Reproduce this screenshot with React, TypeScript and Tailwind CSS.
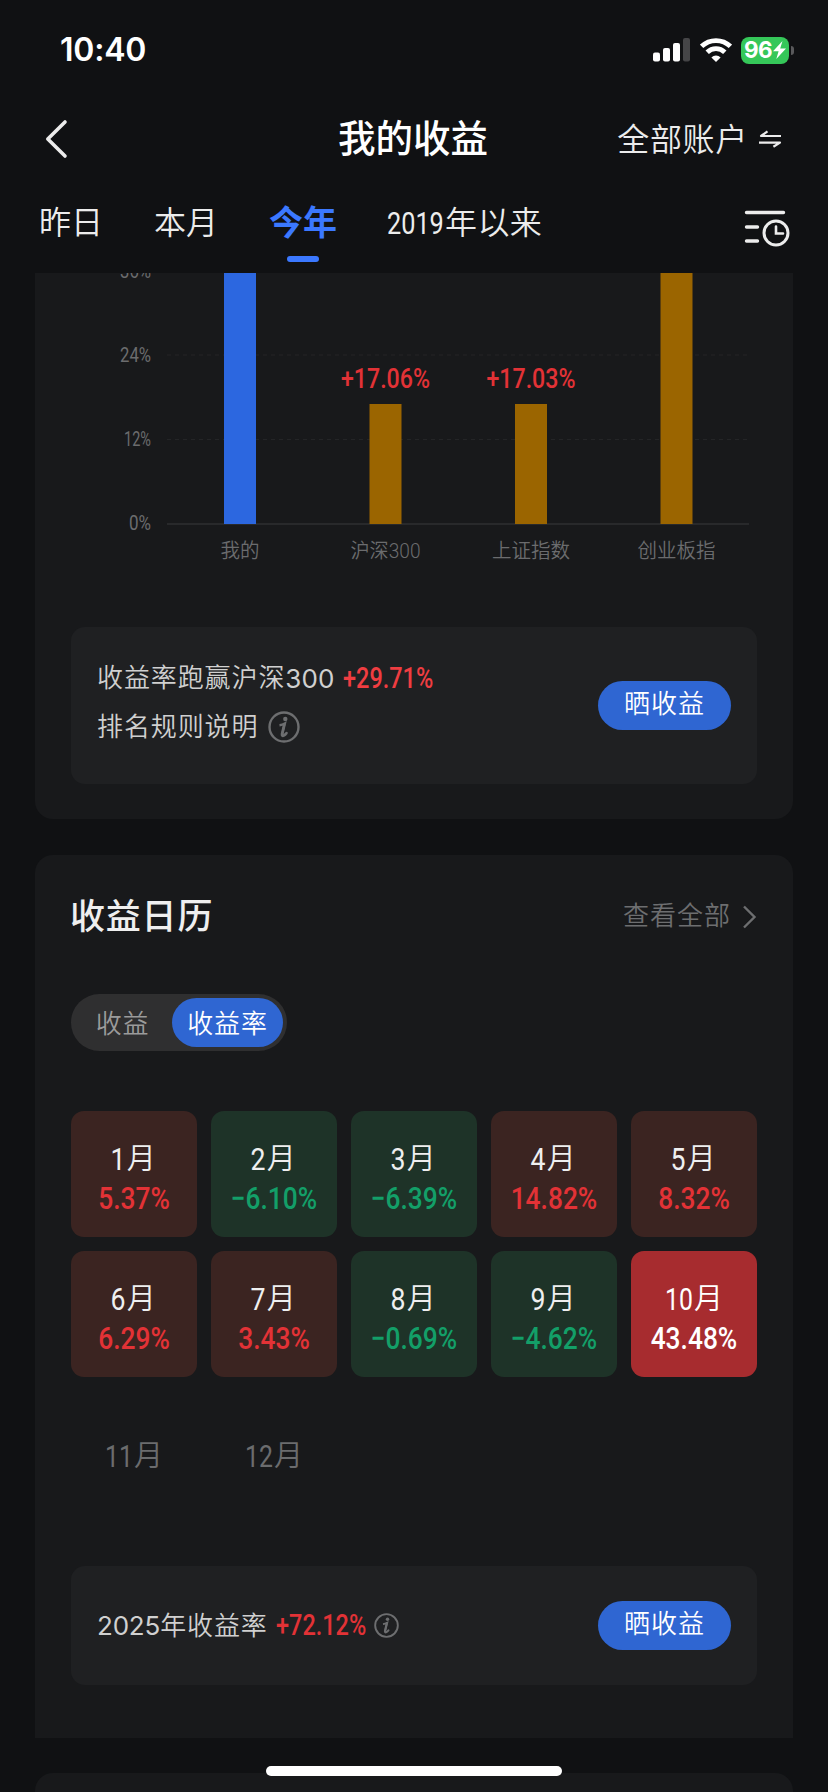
import React, { useState } from 'react';
import clsx from 'clsx';

const FONT = 'font-[Roboto,"Noto_Sans_CJK_SC",sans-serif]';

const months = [
  { label: '1', value: '5.37%' },
  { label: '2', value: '−6.10%' },
  { label: '3', value: '−6.39%' },
  { label: '4', value: '14.82%' },
  { label: '5', value: '8.32%' },
  { label: '6', value: '6.29%' },
  { label: '7', value: '3.43%' },
  { label: '8', value: '−0.69%' },
  { label: '9', value: '−4.62%' },
  { label: '10', value: '43.48%', current: true },
  { label: '11' },
  { label: '12' },
];

const bars = [
  { name: '我的', x: 205, top: 0, fill: '#2c67e0', width: 39 },
  { name: '沪深300', x: 350.5, top: 131, fill: '#9b6500', label: '+17.06%', width: 70 },
  { name: '上证指数', x: 496, top: 131, fill: '#9b6500', label: '+17.03%', width: 78 },
  { name: '创业板指', x: 641.5, top: 0, fill: '#9b6500', width: 78 },
];

const ticks = [
  { label: '36%', y: -3, width: 31 },
  { label: '24%', y: 81, width: 31 },
  { label: '12%', y: 165, width: 27 },
  { label: '0%', y: 249, width: 22 },
];

function StatusBar() {
  return (
    <div className="flex h-[100px] shrink-0 items-center justify-between pl-[60px] pr-[34px]">
      <span className='font-["Inter",sans-serif] text-[32px] font-semibold leading-none tracking-[-0.2px]'>10:40</span>
      <div className="flex items-center">
        <svg width="38" height="24" viewBox="0 0 38 24" fill="#fff">
          <rect x="0" y="14.5" width="7" height="9" rx="2" />
          <rect x="10" y="10" width="7" height="13.5" rx="2" />
          <rect x="20" y="5" width="7" height="18.5" rx="2" />
          <rect x="30" y="0" width="7" height="23.5" rx="2" fill="#454547" />
        </svg>
        <svg className="ml-[9px]" width="32" height="24" viewBox="0 0 32 24" fill="none" stroke="#fff">
          <path d="M1.6 8.4a20.6 20.6 0 0 1 28.8 0" strokeWidth="4.8" />
          <path d="M7.2 14.2a12.6 12.6 0 0 1 17.6 0" strokeWidth="4.8" />
          <path d="M11.4 19.4a6.6 6.6 0 0 1 9.2 0L16 24z" fill="#fff" stroke="none" />
        </svg>
        <div className="ml-[9px] flex h-[27px] w-[48px] items-center justify-center gap-px rounded-[8px] bg-[#35c759] text-white">
          <span className='font-["Inter",sans-serif] text-[22.5px] font-bold leading-none tracking-[-0.5px]'>96</span>
          <svg width="13" height="18" viewBox="0 0 13 18" fill="#fff">
            <path d="M9.5 0 0 10.2h5.6L3.3 18 13 7.6H7.2z" />
          </svg>
        </div>
        <div className="ml-[2px] h-[9px] w-[3px] rounded-r-full bg-[#59595b]" />
      </div>
    </div>
  );
}

function Header() {
  return (
    <div className="grid h-[78px] shrink-0 grid-cols-[1fr_auto_1fr] items-center pl-[44px] pr-[46px]">
      <svg width="26" height="40" viewBox="0 0 26 40" fill="none" stroke="#ececec" strokeWidth="3.6" strokeLinecap="round" strokeLinejoin="round">
        <path d="M21 3 3.8 20 21 37" />
      </svg>
      <h1 className="pt-[2px] text-[37.5px] font-medium leading-none">我的收益</h1>
      <div className="flex items-center justify-end">
        <span className="pt-[2px] text-[32px] font-[350] leading-none tracking-[0.7px] text-[#ececec]">全部账户</span>
        <svg className="ml-[11px]" width="23" height="18" viewBox="0 0 23 18" fill="none" stroke="#ececec" strokeWidth="2.2" strokeLinejoin="round">
          <path d="M22 6H2l6.5-4.6M0 12.6h21l-6.6 4.2" />
        </svg>
      </div>
    </div>
  );
}

function Tabs() {
  const [active, setActive] = useState(2);
  const tabs = ['昨日', '本月', '今年'];

  return (
    <div className="flex h-[95px] shrink-0 items-start pl-[39px] pr-[38px] pt-[22px]">
      {tabs.map((tab, i) => (
        <button
          key={tab}
          onClick={() => setActive(i)}
          className={clsx(
            'flex flex-col items-center text-left leading-[46px]',
            i === 0 && 'w-[115px] items-start',
            i === 1 && 'w-[115px] items-start',
            i === 2 && 'w-[68px]',
            active === i ? 'text-[34px] font-bold text-[#3b78ff]' : 'text-[32px] font-[350] text-[#ececec]'
          )}
        >
          {tab}
          {active === i && <span className="mt-[10px] h-[6px] w-[32px] rounded-full bg-[#3b78ff]" />}
        </button>
      ))}
      <button className="ml-[50px] flex text-[32px] font-[350] leading-[46px] text-[#ececec]">
        <span className="w-[58px]">
          <span className="inline-block origin-left scale-x-[0.79] font-normal">2019</span>
        </span>
        <span className="tracking-[0.4px]">年以来</span>
      </button>
      <svg className="ml-auto mt-[9px]" width="46" height="38" viewBox="0 0 46 38" fill="none" stroke="#ececec" strokeWidth="3.4" strokeLinecap="round">
        <path d="M2.5 3.5h37M2.5 18h11M2.5 32h11" />
        <circle cx="32" cy="24" r="12" strokeWidth="3" />
        <path d="M32 17.5v7h7" strokeWidth="2.6" />
      </svg>
    </div>
  );
}

function ReturnChart() {
  return (
    <svg className="block" width="758" height="300" viewBox="0 0 758 300">
      {ticks.map((t) => (
        <text key={t.label} x="116" y={t.y + 8} textAnchor="end" textLength={t.width} lengthAdjust="spacingAndGlyphs" fill="#6b6c6e" fontSize="20">
          {t.label}
        </text>
      ))}
      <path d="M132 82h582M132 166.5h582" stroke="#242527" strokeDasharray="4 4" />
      <path d="M132 251h582" stroke="#28292b" strokeWidth="2" />
      {bars.map((b) => (
        <g key={b.name}>
          <rect x={b.x - 16} y={b.top} width="32" height={251 - b.top} fill={b.fill} />
          <text x={b.x} y="285" textAnchor="middle" textLength={b.width} lengthAdjust="spacingAndGlyphs" fill="#6b6c6e" fontSize="20" fontWeight="350">
            {b.name}
          </text>
          {b.label && (
            <text x={b.x} y="115" textAnchor="middle" textLength="89" lengthAdjust="spacingAndGlyphs" fill="#e23236" fontSize="28" fontWeight="500">
              {b.label}
            </text>
          )}
        </g>
      ))}
    </svg>
  );
}

function InfoIcon({ size }: { size: number }) {
  return (
    <svg width={size} height={size} viewBox="0 0 32 32" fill="none" stroke="#6d6e70">
      <circle cx="16" cy="16" r="14.5" strokeWidth="2.4" />
      <circle cx="17.3" cy="8" r="2.2" fill="#6d6e70" stroke="none" />
      <path d="M11.5 14.2c2-.2 3.6-.7 5.4-1.7L14.3 23" strokeWidth="2.4" />
      <path d="M16.3 13 14 23c-.3 1.7.6 2.2 1.8 1.5 1-.5 1.9-1.4 2.7-2.4" strokeWidth="2.6" strokeLinecap="round" />
    </svg>
  );
}

function ShareButton() {
  return (
    <button className="flex h-[49px] w-[133px] items-center justify-center rounded-full bg-[#2f66d2] pb-[3px] text-[26px] font-[350] leading-none tracking-[1px] text-white">
      晒收益
    </button>
  );
}

function Percent({ children, className }: { children: React.ReactNode; className?: string }) {
  return (
    <span className={clsx('inline-block origin-left whitespace-nowrap font-medium', className)}>{children}</span>
  );
}

function MonthTile({ label, value, current }: { label: string; value?: string; current?: boolean }) {
  const down = value?.startsWith('−');

  return (
    <div
      className={clsx(
        'flex h-[126px] flex-col items-center justify-center rounded-[13px]',
        !value && 'pt-[4px] text-[#6b6c6e]',
        value && 'pt-[9px] text-[#efefef]',
        current && 'bg-[#a72c2f] text-white',
        value && !current && (down ? 'bg-[#1e3328]' : 'bg-[#3b2421]')
      )}
    >
      <div className={clsx('flex h-[39px] items-center text-[31px] leading-none', label.length > 1 ? 'mr-[7px]' : 'mr-[4px]')}>
        <span className={clsx('inline-block origin-right', label.length > 1 ? 'scale-x-[0.8]' : 'scale-x-[0.86]')}>{label}</span>
        <span className="ml-px pt-px text-[29px] font-[350]">月</span>
      </div>
      {value && (
        <div
          className={clsx(
            'flex h-[39px] scale-x-[0.85] items-center whitespace-nowrap text-[31px] font-medium leading-none',
            current ? 'text-white' : down ? 'text-[#139f68]' : 'text-[#e23236]'
          )}
        >
          {value}
        </div>
      )}
    </div>
  );
}

export default function App() {
  const [mode, setMode] = useState('rate');

  return (
    <div className={clsx('relative flex h-[1792px] w-[828px] flex-col overflow-hidden bg-[#101113] text-white', FONT)}>
      <StatusBar />
      <Header />
      <Tabs />

      <div className="flex flex-col px-[35px]">
        {/* Comparison with indices */}
        <section className="h-[546px] shrink-0 rounded-b-[18px] bg-[#18191b]">
          <ReturnChart />
          <div className="mx-[36px] mt-[54px] flex h-[157px] items-center justify-between rounded-[14px] bg-[#1f2022] px-[26px]">
            <div className="pb-[6px] text-[26px] font-[350] leading-[49px] text-[#d0d0d0]">
              <div className="flex whitespace-nowrap">
                <span className="tracking-[0.9px]">收益率跑赢沪深</span>
                <span className='font-["Inter",sans-serif] font-normal tracking-[0.1px]'>300</span>
                <Percent className="ml-[9px] scale-x-[0.81] text-[29px] text-[#ef3d41]">+29.71%</Percent>
              </div>
              <div className="flex items-center">
                <span className="mr-[10px] tracking-[0.9px]">排名规则说明</span>
                <InfoIcon size={32} />
              </div>
            </div>
            <ShareButton />
          </div>
        </section>

        {/* Return calendar */}
        <section className="mt-[36px] h-[883px] shrink-0 rounded-t-[18px] bg-[#18191b] px-[36px]">
          <div className="flex h-[122px] items-center justify-between">
            <h2 className="-ml-px mt-[2px] text-[35px] font-medium leading-none tracking-[0.8px] text-[#efefef]">收益日历</h2>
            <button className="flex items-center text-[26px] font-[350] leading-none tracking-[1px] text-[#6d6e70]">
              查看全部
              <svg className="ml-[12px] mt-[2px]" width="14" height="24" viewBox="0 0 14 24" fill="none" stroke="#6d6e70" strokeWidth="2.4">
                <path d="M1 1.5 11.5 12 1 22.5" />
              </svg>
            </button>
          </div>

          <div className="mt-[17px] flex h-[57px] w-[216px] items-center rounded-full bg-[#2f2f30] p-[4px] text-[26px] font-[350] leading-none tracking-[0.8px]">
            <button
              onClick={() => setMode('amount')}
              className={clsx('h-[49px] w-[97px] rounded-full pr-[2px] pt-[2px]', mode === 'amount' ? 'bg-[#2f66d2] text-white' : 'text-[#9b9b9b]')}
            >
              收益
            </button>
            <button
              onClick={() => setMode('rate')}
              className={clsx('h-[49px] w-[111px] rounded-full pt-[2px]', mode === 'rate' ? 'bg-[#2f66d2] text-white' : 'text-[#9b9b9b]')}
            >
              收益率
            </button>
          </div>

          <div className="mt-[60px] grid grid-cols-5 gap-[14px]">
            {months.map((m) => (
              <MonthTile key={m.label} {...m} />
            ))}
          </div>

          <div className="mt-[49px] flex h-[119px] items-center justify-between rounded-[14px] bg-[#1f2022] px-[26px]">
            <div className="flex items-center whitespace-nowrap text-[26px] font-[350] leading-none text-[#d0d0d0]">
              <span className='font-["Inter",sans-serif] font-normal tracking-[-0.2px]'>2025</span>
              <span className="tracking-[0.9px]">年收益率</span>
              <span className="ml-[8px] w-[98px]">
                <Percent className="scale-x-[0.81] text-[29px] text-[#e23236]">+72.12%</Percent>
              </span>
              <InfoIcon size={25} />
            </div>
            <ShareButton />
          </div>
        </section>

        <section className="mt-[35px] h-[60px] shrink-0 rounded-t-[18px] bg-[#18191b]" />
      </div>

      {/* Home indicator */}
      <div className="absolute bottom-[16px] left-[266px] h-[10px] w-[296px] rounded-full bg-white" />
    </div>
  );
}
